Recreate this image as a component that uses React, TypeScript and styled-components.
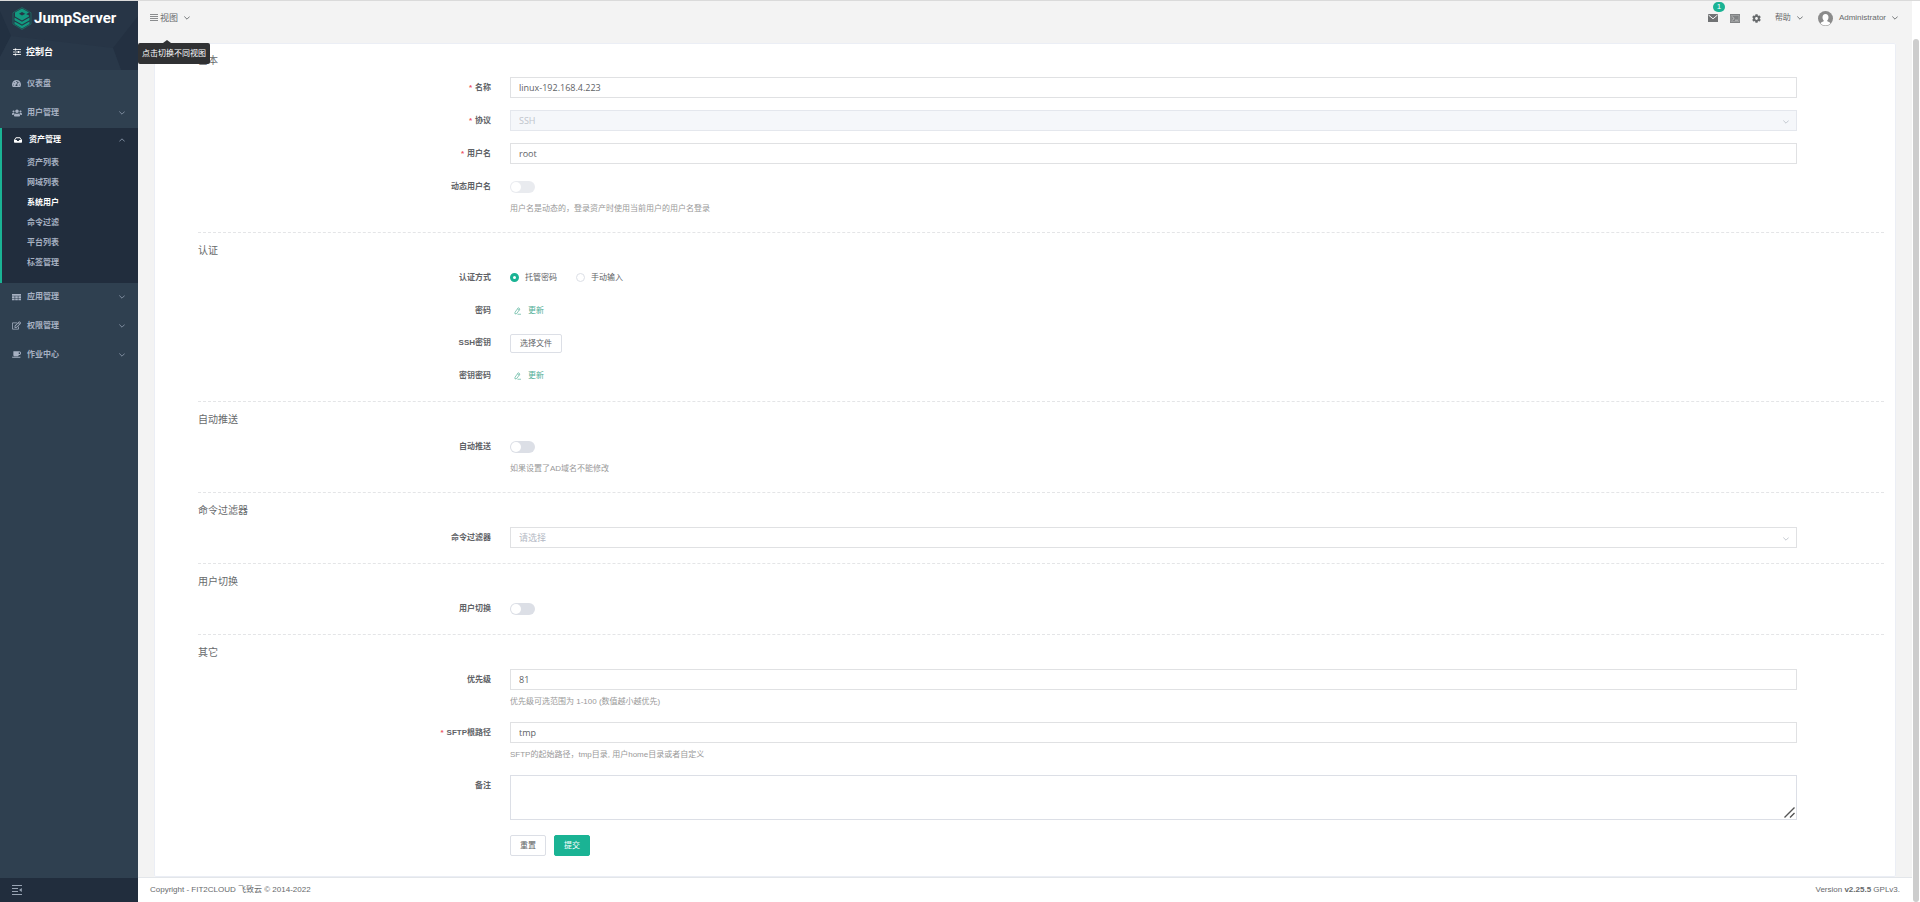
import React, { ReactNode } from 'react';
import styled, { createGlobalStyle } from 'styled-components';
import { FaTachometerAlt, FaUsers, FaInbox, FaRegEdit, FaCoffee, FaCog } from 'react-icons/fa';

const sans = '"Liberation Sans", "Noto Sans CJK SC", sans-serif';
const inputFont = '"Open Sans", "Noto Sans CJK SC", sans-serif';
const green = '#1ab394';

const GlobalStyle = createGlobalStyle`
  *, *::before, *::after { box-sizing: border-box; }
  body { margin: 0; background: #f3f3f3; font: 8px/20px ${sans}; color: #676a6c; }
  button, input, select, textarea { font: inherit; color: inherit; margin: 0; }
  a { color: inherit; text-decoration: none; }
  h1, h2, ul, p { margin: 0; padding: 0; font-weight: normal; list-style: none; }
`;

const Page = styled.div`
  display: flex;
  min-height: 100vh;
  border-top: 1px solid #dadada;
`;

/* Sidebar */
const Sidebar = styled.aside`
  flex: 0 0 138px;
  display: flex;
  flex-direction: column;
  background: #2f4050;
  color: #a7b1c2;
  font-weight: bold;
`;
const Brand = styled.div`
  position: relative;
  height: 69px;
  background: #263445;
  color: #fff;
`;
const BrandPattern = styled.svg`
  position: absolute;
  inset: 0;
  width: 100%;
  height: 100%;
`;
const BrandInner = styled.div`
  position: relative;
  display: flex;
  flex-direction: column;
  height: 100%;
`;
const Logo = styled.a`
  display: flex;
  align-items: center;
  gap: 2px;
  height: 34px;
  padding-left: 12px;
  font: bold 15px/34px Roboto, sans-serif;
`;
const Console = styled.button`
  display: flex;
  align-items: center;
  gap: 5px;
  height: 35px;
  padding: 0 0 1px 13px;
  border: 0;
  background: none;
  font-size: 9px;
  font-weight: bold;
`;
const Menu = styled.nav`
  flex: 1;
`;
const MenuLink = styled.a`
  display: grid;
  grid-template-columns: 15px 1fr 6px;
  align-items: center;
  height: 29px;
  padding: 0 13px 2px 10px;
  & > :last-child { color: #8795a8; }
`;
const MenuGroup = styled.div<{ $open?: boolean }>`
  border-left: 2px solid ${(p) => (p.$open ? green : 'transparent')};
  background: ${(p) => (p.$open ? '#212d3d' : 'transparent')};
  color: ${(p) => (p.$open ? '#fff' : 'inherit')};
  padding-left: ${(p) => (p.$open ? 2 : 0)}px;
  padding-bottom: ${(p) => (p.$open ? 10 : 0)}px;
  & > ${MenuLink} { height: ${(p) => (p.$open ? 25 : 29)}px; }
`;
const SubLink = styled.a<{ $active?: boolean }>`
  display: block;
  padding-left: 23px;
  color: ${(p) => (p.$active ? '#fff' : '#a7b1c2')};
`;
const Collapse = styled.button`
  display: flex;
  align-items: center;
  height: 24px;
  padding: 0 0 0 12px;
  border: 0;
  background: #212d3d;
  color: #98a3b3;
`;

/* Main column */
const Main = styled.div`
  flex: 1;
  min-width: 0;
  display: flex;
  flex-direction: column;
`;
const TopBar = styled.header`
  display: flex;
  align-items: center;
  justify-content: space-between;
  height: 42px;
  padding: 0 14px 8px 12px;
`;
const ViewSwitch = styled.button`
  position: relative;
  display: flex;
  align-items: center;
  gap: 2px;
  padding: 0;
  border: 0;
  background: none;
  font-size: 9px;
  line-height: 20px;
  & > svg:last-of-type { margin-left: 4px; }
`;
const Tooltip = styled.span`
  position: absolute;
  top: 35px;
  left: -12px;
  z-index: 2;
  width: 72px;
  line-height: 21px;
  border-radius: 2px;
  background: #303133;
  color: #fff;
  font-size: 8px;
  white-space: nowrap;
  &::before {
    content: '';
    position: absolute;
    left: 25px;
    top: -3px;
    border: solid transparent;
    border-width: 0 4px 3px;
    border-bottom-color: #303133;
  }
`;
const Tools = styled.div`
  display: flex;
  align-items: center;
`;
const Tool = styled.button<{ $gap: number }>`
  position: relative;
  display: flex;
  align-items: center;
  gap: 6px;
  height: 20px;
  margin-right: ${(p) => p.$gap}px;
  padding: 0;
  border: 0;
  background: none;
`;
const Badge = styled.span`
  position: absolute;
  top: -6px;
  left: 5px;
  min-width: 12px;
  border-radius: 5px;
  background: ${green};
  color: #fff;
  font-size: 8px;
  line-height: 10px;
  text-align: center;
`;
const Card = styled.main`
  flex: 1;
  margin: 0 16px;
  padding: 0 12px 6px 44px;
  border-radius: 2px;
  background: #fff;
  box-shadow: inset 0 0 0 1px #ebeef5;
`;
const Footer = styled.footer`
  display: flex;
  justify-content: space-between;
  height: 25px;
  padding: 0 12px;
  border-top: 1px solid #e3e6ea;
  background: #fff;
  line-height: 24px;
`;
const ScrollTrack = styled.div`
  flex: 0 0 8px;
  display: flex;
  padding: 38px 1px 0;
  background: #fff;
`;
const ScrollThumb = styled.div`
  flex: 1;
  border-radius: 3px;
  background: #cdcdcd;
`;

/* Form */
const Section = styled.section`
  padding-bottom: 15px;
  & + & { border-top: 1px dashed #e4e5e7; }
`;
const SectionTitle = styled.h2`
  padding-top: 2px;
  font-size: 10px;
  line-height: 32px;
`;
const Rows = styled.div`
  display: grid;
  gap: 12px;
  padding-right: 87px;
`;
const RowBox = styled.div<{ $height: number }>`
  display: grid;
  grid-template-columns: 312px 1fr;
  & > :first-child { line-height: ${(p) => p.$height}px; }
`;
const Label = styled.label<{ $required?: boolean }>`
  padding-right: 19px;
  color: #606266;
  font-weight: bold;
  text-align: right;
  &::before {
    content: ${(p) => (p.$required ? "'*'" : 'none')};
    margin-right: 3px;
    color: #ed5565;
  }
`;
const Content = styled.div<{ $height: number }>`
  display: flex;
  align-items: center;
  min-height: ${(p) => p.$height}px;
`;
const Help = styled.p`
  grid-column: 2;
  padding-top: 3px;
  color: #999;
  line-height: 17px;
`;
const TextInput = styled.input`
  width: 100%;
  height: 21px;
  padding: 0 8px;
  border: 1px solid #e0e1e3;
  background: #fff;
  color: #606266;
  font: 9px/19px ${inputFont};
`;
const SelectWrap = styled.div`
  position: relative;
  width: 100%;
  height: 21px;
  color: #c0c4cc;
  & > svg { position: absolute; right: 8px; top: 10px; pointer-events: none; }
`;
const Select = styled.select`
  display: block;
  appearance: none;
  width: 100%;
  height: 21px;
  padding: 0 8px;
  border: 1px solid #e0e1e3;
  border-radius: 0;
  background: #fff;
  color: #b4b9c4;
  font: 9px/19px ${inputFont};
  &:disabled { background: #f5f7fa; border-color: #e4e7ed; color: #c0c4cc; opacity: 1; }
`;
const AreaWrap = styled.div`
  position: relative;
  width: 100%;
  & > svg { position: absolute; right: 2px; bottom: 2px; pointer-events: none; }
`;
const TextArea = styled.textarea`
  display: block;
  width: 100%;
  height: 45px;
  padding: 3px 8px;
  border: 1px solid #dcdfe6;
  background: #fff;
  resize: vertical;
  font: 9px/14px ${inputFont};
  &::-webkit-resizer { background: transparent; }
`;
const Switch = styled.input`
  appearance: none;
  display: flex;
  width: 25px;
  height: 12px;
  padding: 1px;
  border-radius: 6px;
  background: #dcdfe6;
  &::before {
    content: '';
    width: 10px;
    height: 10px;
    border-radius: 50%;
    background: #fff;
  }
  &:disabled { opacity: 0.6; }
  &:checked { justify-content: flex-end; background: ${green}; }
`;
const RadioLabel = styled.label`
  display: flex;
  align-items: center;
  gap: 6px;
  margin-right: 19px;
  color: #606266;
`;
const Radio = styled.input`
  appearance: none;
  width: 9px;
  height: 9px;
  border: 1px solid #dcdfe6;
  border-radius: 50%;
  background: #fff;
  &:checked { border: 3px solid ${green}; }
`;
const UpdateButton = styled.button`
  display: flex;
  align-items: center;
  gap: 6px;
  padding: 0 4px;
  border: 0;
  background: none;
  color: #4fae96;
`;
const Button = styled.button<{ $primary?: boolean; $height: number }>`
  height: ${(p) => p.$height}px;
  padding: 0 9px;
  border: 1px solid ${(p) => (p.$primary ? green : '#dcdfe6')};
  border-radius: 2px;
  background: ${(p) => (p.$primary ? green : '#fff')};
  color: ${(p) => (p.$primary ? '#fff' : '#606266')};
  line-height: 17px;
`;
const Actions = styled.div`
  display: flex;
  gap: 8px;
  margin: 3px 0 0 312px;
`;

const LogoMark = () => (
  <svg width="20" height="23" viewBox="0 0 40 46" fill="none" aria-hidden>
    <path d="M20 1 38 11.500V34L20 45 2 34V11.500Z" stroke="#1b7468" strokeWidth="1.500" />
    <path d="M20 3 34 11 28 14.500 20 10 14 13.500 20 17 27 13.500 34 17V19L20 27 6 19V11Z" fill="#129a80" />
    <path d="M5 21 20 29.500 35 21V26.500L20 35 5 26.500Z" fill="#129a80" />
    <path d="M5 29 20 37.500 35 29V34L20 43 5 34Z" fill="#129a80" />
  </svg>
);
const SlidersIcon = () => (
  <svg width="8" height="8" viewBox="0 0 8 8" stroke="currentColor" aria-hidden>
    <path d="M0 1.500H8M0 4H8M0 6.500H8" strokeWidth=".8" />
    <path d="M2.500 .5V2.500M5.500 3V5M2.500 5.500V7.500" strokeWidth="1.300" />
  </svg>
);
const BarsIcon = () => (
  <svg width="8" height="8" viewBox="0 0 8 8" stroke="#8a8c8e" aria-hidden>
    <path d="M0 .5H8M0 2.500H8M0 4.500H8M0 6.500H8" strokeWidth="1" />
  </svg>
);
const TableIcon = () => (
  <svg width="9" height="8" viewBox="0 0 9 8" fill="currentColor" aria-hidden>
    <path d="M0 1H9V2.700H0ZM0 3.200H2.600V4.900H0ZM3.200 3.200H5.800V4.900H3.200ZM6.400 3.200H9V4.900H6.400ZM0 5.400H2.600V7.200H0ZM3.200 5.400H5.800V7.200H3.200ZM6.400 5.400H9V7.200H6.400Z" />
  </svg>
);
const CollapseIcon = () => (
  <svg width="10" height="10" viewBox="0 0 10 10" stroke="currentColor" aria-hidden>
    <path d="M0 .5H10M0 3.500H6M0 6.500H6M0 9.500H10" strokeWidth="1" />
    <path d="M9.800 3 7 5 9.800 7Z" fill="currentColor" stroke="none" />
  </svg>
);
const MailIcon = () => (
  <svg width="10" height="8" viewBox="0 0 10 8" aria-hidden>
    <path d="M0 0H10V8H0Z" fill="#707274" />
    <path d="M.5 1 5 4.800 9.500 1" stroke="#f3f3f3" strokeWidth="1" fill="none" />
  </svg>
);
const TerminalIcon = () => (
  <svg width="10" height="9" viewBox="0 0 10 9" fill="none" aria-hidden>
    <path d="M0 0H10V9H0Z" fill="#808284" />
    <path d="M1 1.500H9V7.500H1Z" stroke="#b5b6b7" strokeWidth=".5" />
    <path d="M2.200 2.700 4.200 4.500 2.200 6.300M5 6.200H8" stroke="#ddd" strokeWidth=".7" />
  </svg>
);
const AvatarIcon = () => (
  <svg width="15" height="15" viewBox="0 0 30 30" aria-hidden>
    <circle cx="15" cy="15" r="15" fill="#8b8b8b" />
    <path d="M15 6C19 6 21 9 21 13S18.500 19 18 20C20 22 24 22 25 25A14 14 0 0 1 5 25C6 22 10 22 12 20 11.500 19 9 17 9 13S11 6 15 6Z" fill="#fff" />
  </svg>
);
const PenIcon = () => (
  <svg width="8" height="8" viewBox="0 0 16 16" fill="none" stroke="currentColor" strokeWidth="1.300" aria-hidden>
    <path d="M8.500 1.500 12 4 5.500 13 2 14 2 10.500ZM7 4 10.500 6.500M7 14.500H14" />
  </svg>
);
const GripIcon = () => (
  <svg width="11" height="11" viewBox="0 0 11 11" stroke="#555" strokeWidth="1.400" aria-hidden>
    <path d="M.5 10.500 10.500 .5M6 10.500 10.500 6" />
  </svg>
);
const Arrow = ({ up }: { up?: boolean }) => (
  <svg width="6" height="4" viewBox="0 0 6 4" fill="none" stroke="currentColor" strokeWidth=".9" display="block" aria-hidden>
    <path d={up ? 'M.3 3.500 3 .8 5.700 3.500' : 'M.3 .5 3 3.200 5.700 .5'} />
  </svg>
);

const subItems = ['资产列表', '网域列表', '系统用户', '命令过滤', '平台列表', '标签管理'];

type ItemProps = { icon: ReactNode; text: string; arrow?: 'up' | 'down' };
const Item = ({ icon, text, arrow }: ItemProps) => (
  <MenuLink href="#">
    {icon}
    <span>{text}</span>
    <i>{arrow && <Arrow up={arrow === 'up'} />}</i>
  </MenuLink>
);

type RowProps = { label: string; id?: string; required?: boolean; help?: string; height?: number; children: ReactNode };
const Row = ({ label, id, required, help, height = 21, children }: RowProps) => (
  <RowBox $height={height}>
    <Label htmlFor={id} $required={required}>{label}</Label>
    <Content $height={height}>{children}</Content>
    {help && <Help>{help}</Help>}
  </RowBox>
);

export default function App() {
  return (
    <>
      <GlobalStyle />
      <Page>
        <Sidebar>
          <Brand>
            <BrandPattern viewBox="0 0 138 69" preserveAspectRatio="none" aria-hidden>
              <path d="M0 0H138V69H0Z" fill="#273546" />
              <path d="M0 10 11 35 0 56Z" fill="#223041" />
              <path d="M138 15 113 47 121 69H138Z" fill="#233041" />
              <path d="M11 35 113 47 121 69H0V56Z" fill="#293849" />
            </BrandPattern>
            <BrandInner>
              <Logo href="#"><LogoMark />JumpServer</Logo>
              <Console type="button"><SlidersIcon />控制台</Console>
            </BrandInner>
          </Brand>
          <Menu>
            <MenuGroup><Item icon={<FaTachometerAlt size={9} />} text="仪表盘" /></MenuGroup>
            <MenuGroup><Item icon={<FaUsers size={10} />} text="用户管理" arrow="down" /></MenuGroup>
            <MenuGroup $open>
              <Item icon={<FaInbox size={8} />} text="资产管理" arrow="up" />
              {subItems.map((s) => <SubLink key={s} href="#" $active={s === '系统用户'}>{s}</SubLink>)}
            </MenuGroup>
            <MenuGroup><Item icon={<TableIcon />} text="应用管理" arrow="down" /></MenuGroup>
            <MenuGroup><Item icon={<FaRegEdit size={9} />} text="权限管理" arrow="down" /></MenuGroup>
            <MenuGroup><Item icon={<FaCoffee size={9} />} text="作业中心" arrow="down" /></MenuGroup>
          </Menu>
          <Collapse type="button" aria-label="Collapse"><CollapseIcon /></Collapse>
        </Sidebar>

        <Main>
          <TopBar>
            <ViewSwitch type="button">
              <BarsIcon />视图<Arrow />
              <Tooltip role="tooltip">点击切换不同视图</Tooltip>
            </ViewSwitch>
            <Tools>
              <Tool type="button" $gap={12} aria-label="Messages"><MailIcon /><Badge>1</Badge></Tool>
              <Tool type="button" $gap={12} aria-label="Terminal"><TerminalIcon /></Tool>
              <Tool type="button" $gap={14} aria-label="Settings"><FaCog size={9} /></Tool>
              <Tool type="button" $gap={15}>帮助<Arrow /></Tool>
              <Tool type="button" $gap={0}><AvatarIcon />Administrator<Arrow /></Tool>
            </Tools>
          </TopBar>

          <Card>
            <form>
              <Section>
                <SectionTitle>基本</SectionTitle>
                <Rows>
                  <Row label="名称" id="name" required><TextInput id="name" defaultValue="linux-192.168.4.223" /></Row>
                  <Row label="协议" id="protocol" required>
                    <SelectWrap>
                      <Select id="protocol" disabled><option>SSH</option></Select>
                      <Arrow />
                    </SelectWrap>
                  </Row>
                  <Row label="用户名" id="username" required><TextInput id="username" defaultValue="root" /></Row>
                  <Row label="动态用户名" id="dynamic" help="用户名是动态的，登录资产时使用当前用户的用户名登录">
                    <Switch id="dynamic" type="checkbox" role="switch" disabled />
                  </Row>
                </Rows>
              </Section>
              <Section>
                <SectionTitle>认证</SectionTitle>
                <Rows>
                  <Row label="认证方式">
                    <RadioLabel><Radio type="radio" name="auth" defaultChecked />托管密码</RadioLabel>
                    <RadioLabel><Radio type="radio" name="auth" />手动输入</RadioLabel>
                  </Row>
                  <Row label="密码" id="password"><UpdateButton id="password" type="button"><PenIcon />更新</UpdateButton></Row>
                  <Row label="SSH密钥" id="key" height={20}><Button id="key" type="button" $height={19}>选择文件</Button></Row>
                  <Row label="密钥密码" id="passphrase"><UpdateButton id="passphrase" type="button"><PenIcon />更新</UpdateButton></Row>
                </Rows>
              </Section>
              <Section>
                <SectionTitle>自动推送</SectionTitle>
                <Rows>
                  <Row label="自动推送" id="push" help="如果设置了AD域名不能修改"><Switch id="push" type="checkbox" role="switch" /></Row>
                </Rows>
              </Section>
              <Section>
                <SectionTitle>命令过滤器</SectionTitle>
                <Rows>
                  <Row label="命令过滤器" id="filter">
                    <SelectWrap>
                      <Select id="filter"><option>请选择</option></Select>
                      <Arrow />
                    </SelectWrap>
                  </Row>
                </Rows>
              </Section>
              <Section>
                <SectionTitle>用户切换</SectionTitle>
                <Rows>
                  <Row label="用户切换" id="su"><Switch id="su" type="checkbox" role="switch" /></Row>
                </Rows>
              </Section>
              <Section>
                <SectionTitle>其它</SectionTitle>
                <Rows>
                  <Row label="优先级" id="priority" help="优先级可选范围为 1-100 (数值越小越优先)"><TextInput id="priority" defaultValue="81" /></Row>
                  <Row label="SFTP根路径" id="sftp" required help="SFTP的起始路径，tmp目录, 用户home目录或者自定义"><TextInput id="sftp" defaultValue="tmp" /></Row>
                  <Row label="备注" id="comment"><AreaWrap><TextArea id="comment" /><GripIcon /></AreaWrap></Row>
                  <Actions>
                    <Button type="reset" $height={21}>重置</Button>
                    <Button type="submit" $primary $height={21}>提交</Button>
                  </Actions>
                </Rows>
              </Section>
            </form>
          </Card>

          <Footer>
            <span>Copyright - FIT2CLOUD 飞致云 © 2014-2022</span>
            <span>Version <b>v2.25.5</b> GPLv3.</span>
          </Footer>
        </Main>
        <ScrollTrack aria-hidden><ScrollThumb /></ScrollTrack>
      </Page>
    </>
  );
}
